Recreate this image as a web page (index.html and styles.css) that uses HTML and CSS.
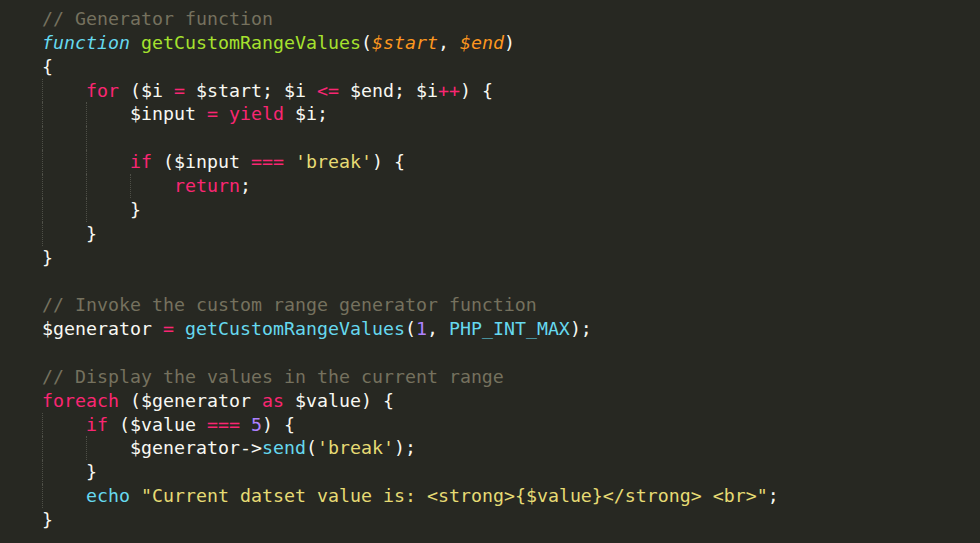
FILE: index.html
```html
<!DOCTYPE html>
<html>
<head>
<meta charset="utf-8">
<link rel="stylesheet" href="styles.css">
</head>
<body>
<pre class="code"><div class="ln"><span class="c">// Generator function</span></div><div class="ln"><span class="st">function</span> <span class="fn">getCustomRangeValues</span>(<span class="pa">$start</span>, <span class="pa">$end</span>)</div><div class="ln">{</div><div class="ln"><span class="g"></span><span class="k">for</span> ($i <span class="k">=</span> $start; $i <span class="k">&lt;=</span> $end; $i<span class="k">++</span>) {</div><div class="ln"><span class="g"></span><span class="g"></span>$input <span class="k">=</span> <span class="k">yield</span> $i;</div><div class="ln"><span class="g"></span><span class="g"></span></div><div class="ln"><span class="g"></span><span class="g"></span><span class="k">if</span> ($input <span class="k">===</span> <span class="s">'break'</span>) {</div><div class="ln"><span class="g"></span><span class="g"></span><span class="g"></span><span class="k">return</span>;</div><div class="ln"><span class="g"></span><span class="g"></span>}</div><div class="ln"><span class="g"></span>}</div><div class="ln">}</div><div class="ln"></div><div class="ln"><span class="c">// Invoke the custom range generator function</span></div><div class="ln">$generator <span class="k">=</span> <span class="sf">getCustomRangeValues</span>(<span class="n">1</span>, <span class="sf">PHP_INT_MAX</span>);</div><div class="ln"></div><div class="ln"><span class="c">// Display the values in the current range</span></div><div class="ln"><span class="k">foreach</span> ($generator <span class="k">as</span> $value) {</div><div class="ln"><span class="g"></span><span class="k">if</span> ($value <span class="k">===</span> <span class="n">5</span>) {</div><div class="ln"><span class="g"></span><span class="g"></span>$generator-&gt;<span class="sf">send</span>(<span class="s">'break'</span>);</div><div class="ln"><span class="g"></span>}</div><div class="ln"><span class="g"></span><span class="sf">echo</span> <span class="s">"Current datset value is: &lt;strong&gt;{$value}&lt;/strong&gt; &lt;br&gt;"</span>;</div><div class="ln">}</div></pre>
</body>
</html>
```

FILE: styles.css
```css
html, body {
  margin: 0;
  padding: 0;
  background: #272822;
  height: 100%;
}
.code {
  margin: 0;
  padding: 7px 0 0 42px;
  font-family: "DejaVu Sans Mono", "Liberation Mono", monospace;
  font-size: 18.27px;
  line-height: 23.86px;
  color: #f8f8f2;
  white-space: pre;
}
.ln {
  height: 23.86px;
}
.g {
  display: inline-block;
  width: 44px;
  height: 23.86px;
  vertical-align: bottom;
  box-sizing: border-box;
  border-left: 1px dotted #4e4f47;
}
.c { color: #75715e; }
.k { color: #f92672; }
.st { color: #66d9ef; font-style: italic; }
.sf { color: #66d9ef; }
.fn { color: #a6e22e; }
.pa { color: #fd971f; font-style: italic; }
.s { color: #e6db74; }
.n { color: #ae81ff; }
```
